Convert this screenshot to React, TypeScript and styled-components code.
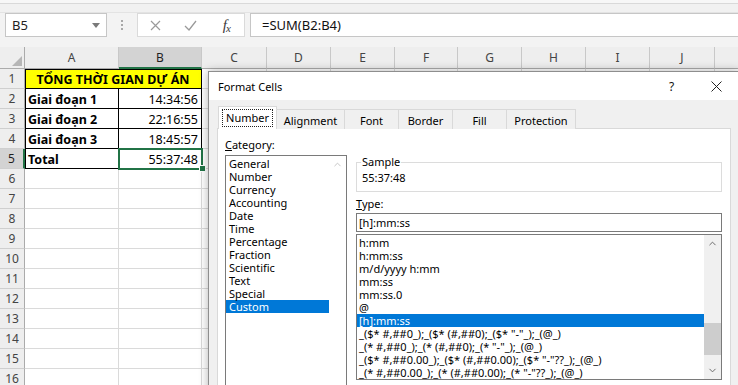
import React from 'react';
import styled, { createGlobalStyle } from 'styled-components';
import { ChevronUp, ChevronDown } from 'lucide-react';

const Global = createGlobalStyle`
  html, body { margin: 0; padding: 0; background: #fff; }
  body { width: 738px; height: 385px; overflow: hidden; }
  * { box-sizing: border-box; }
`;

const Page = styled.div`
  position: relative;
  width: 738px;
  height: 385px;
  overflow: hidden;
  display: flex;
  flex-direction: column;
  background: #f3f3f3;
  font-family: "Noto Sans", sans-serif;
`;

const RibbonEdge = styled.div`
  height: 13px;
  flex: none;
  background: #f1f1f1;
  border-top: 3px solid #f7f7f7;
  border-bottom: 1px solid #e3e3e3;
  box-shadow: inset 0 1px 0 #d9d9d9;
`;

const FormulaRow = styled.div`
  display: flex;
  align-items: stretch;
  height: 34px;
  flex: none;
  padding: 0 0 10px 5px;
  background: #f3f3f3;
`;

const NameBox = styled.div`
  width: 102px;
  background: #fff;
  border: 1px solid #c6c6c6;
  display: flex;
  align-items: center;
  justify-content: space-between;
  padding: 0 6px;
  font-size: 13px;
  color: #222;
`;

const Grip = styled.div`
  width: 30px;
  display: flex;
  flex-direction: column;
  align-items: center;
  justify-content: center;
  gap: 2px;
  span {
    width: 2px;
    height: 2px;
    background: #a8a8a8;
  }
`;

const FxBox = styled.div`
  width: 108px;
  background: #fff;
  border: 1px solid #dadada;
  display: flex;
  align-items: center;
`;

const FxCell = styled.div`
  width: 36px;
  height: 100%;
  display: flex;
  align-items: center;
  justify-content: center;
`;

const FxGlyph = styled.span`
  font-family: "Liberation Serif", serif;
  font-style: italic;
  font-size: 15px;
  color: #3a3a3a;
  letter-spacing: -1px;
  span {
    font-size: 11px;
    position: relative;
    top: 2px;
  }
`;

const FormulaInput = styled.div`
  flex: 1;
  margin-left: 5px;
  background: #fff;
  border: 1px solid #c6c6c6;
  border-right: none;
  display: flex;
  align-items: center;
  padding-left: 11px;
  font-size: 13px;
  color: #111;
`;

const Sheet = styled.div`
  display: grid;
  grid-template-columns: 25px 94px 83px 65px 64px 64px 63px 64px 64px 64px 65px 64px;
  grid-template-rows: 22px;
  grid-auto-rows: 20px;
  background: #fff;
  flex: 1;
`;

const Corner = styled.div`
  background: #eeeeee;
  border-right: 1px solid #ababab;
  border-bottom: 1px solid #ababab;
  display: flex;
  align-items: flex-end;
  justify-content: flex-end;
  padding: 0 2px 2px 0;
`;

const ColHead = styled.div<{ $active?: boolean }>`
  background: ${p => (p.$active ? '#d3d3d3' : '#eeeeee')};
  border-right: 1px solid #c8c8c8;
  border-bottom: ${p => (p.$active ? '2px solid #217346' : '1px solid #ababab')};
  display: flex;
  align-items: center;
  justify-content: center;
  font-size: 12px;
  color: ${p => (p.$active ? '#1f1f1f' : '#444')};
  padding-top: ${p => (p.$active ? '1px' : '0')};
`;

const RowHead = styled.div<{ $active?: boolean }>`
  background: ${p => (p.$active ? '#d3d3d3' : '#eeeeee')};
  border-bottom: 1px solid #cfcfcf;
  border-right: ${p => (p.$active ? '2px solid #217346' : '1px solid #ababab')};
  display: flex;
  align-items: center;
  justify-content: center;
  font-size: 12px;
  color: ${p => (p.$active ? '#1f1f1f' : '#444')};
`;

type CellProps = {
  $ruled?: boolean;
  $left?: boolean;
  $top?: boolean;
  $fill?: string;
  $align?: 'flex-start' | 'flex-end' | 'center';
  $bold?: boolean;
  $span?: number;
  $sel?: boolean;
};

const Cell = styled.div<CellProps>`
  position: ${p => (p.$sel ? 'relative' : 'static')};
  grid-column: span ${p => p.$span || 1};
  background: ${p => p.$fill || '#fff'};
  border-right: 1px solid ${p => (p.$ruled ? '#000' : '#dadada')};
  border-bottom: 1px solid ${p => (p.$ruled ? '#000' : '#dadada')};
  box-shadow: ${p =>
    [p.$left ? 'inset 1px 0 0 #000' : '', p.$top ? 'inset 0 1px 0 #000' : '']
      .filter(Boolean)
      .join(', ') || 'none'};
  display: flex;
  align-items: center;
  justify-content: ${p => p.$align || 'flex-start'};
  padding: 1px 3px 0 3px;
  font-size: 12.5px;
  font-weight: ${p => (p.$bold ? 700 : 400)};
  color: #000;
  white-space: nowrap;
`;

const Selection = styled.div`
  position: absolute;
  top: -1px;
  left: -1px;
  right: -2px;
  bottom: -2px;
  border: 2px solid #217346;
  z-index: 2;
  pointer-events: none;
`;

const FillHandle = styled.div`
  position: absolute;
  right: -5px;
  bottom: -4px;
  width: 7px;
  height: 7px;
  background: #217346;
  border: 1px solid #fff;
  z-index: 3;
`;

/* ---------- dialog ---------- */

const Dialog = styled.div`
  position: absolute;
  left: 208px;
  top: 71px;
  width: 532px;
  height: 330px;
  background: #f0f0f0;
  border: 1px solid #8e8e8e;
  box-shadow: 0 0 9px rgba(0, 0, 0, 0.3);
  display: flex;
  flex-direction: column;
  font-family: "Noto Sans", sans-serif;
  font-size: 11px;
  color: #000;
  z-index: 5;
`;

const TitleBar = styled.div`
  height: 28px;
  flex: none;
  background: #fff;
  display: flex;
  align-items: center;
  padding-left: 9px;
`;

const Title = styled.div`
  flex: 1;
  font-size: 11px;
  padding-top: 1px;
`;

const TitleButton = styled.div`
  width: 45px;
  height: 100%;
  display: flex;
  align-items: center;
  justify-content: center;
  font-size: 12px;
  color: #111;
`;

const DialogBody = styled.div`
  flex: 1;
  display: flex;
  flex-direction: column;
  padding: 6px 8px 0 8px;
  min-height: 0;
`;

const TabStrip = styled.div`
  display: flex;
  align-items: flex-end;
  height: 23px;
  flex: none;
  padding-left: 1px;
  margin-bottom: -1px;
  position: relative;
  z-index: 1;
`;

const Tab = styled.div<{ $w: number; $active?: boolean }>`
  width: ${p => p.$w}px;
  height: ${p => (p.$active ? 23 : 20)}px;
  margin-right: -1px;
  border: 1px solid #d9d9d9;
  border-bottom: none;
  background: ${p => (p.$active ? '#fff' : '#f0f0f0')};
  display: flex;
  align-items: center;
  justify-content: center;
  padding-top: ${p => (p.$active ? '0' : '1px')};
  position: relative;
  z-index: ${p => (p.$active ? 2 : 1)};
`;

const FocusLabel = styled.span`
  outline: 1px dotted #222;
  outline-offset: 0;
  padding: 1px 3px;
  line-height: 14px;
`;

const Pane = styled.div`
  flex: 1;
  background: #fff;
  border: 1px solid #d9d9d9;
  display: flex;
  gap: 9px;
  padding: 0 8px 0 7px;
  min-height: 0;
`;

const LeftCol = styled.div`
  width: 122px;
  flex: none;
  padding-top: 9px;
  display: flex;
  flex-direction: column;
`;

const RightCol = styled.div`
  flex: 1;
  padding-top: 26px;
  display: flex;
  flex-direction: column;
`;

const Label = styled.div<{ $gap?: number }>`
  line-height: 14px;
  height: 14px;
  margin-top: ${p => p.$gap || 0}px;
`;

const ListBox = styled.div<{ $h: number; $gap?: number }>`
  height: ${p => p.$h}px;
  margin-top: ${p => p.$gap || 0}px;
  flex: none;
  border: 1px solid #7a7a7a;
  background: #fff;
  display: flex;
  overflow: hidden;
`;

const Items = styled.div`
  flex: 1;
  padding-top: 1px;
  min-width: 0;
  overflow: hidden;
`;

const Item = styled.div<{ $sel?: boolean; $pad?: number }>`
  height: 13px;
  line-height: 13px;
  padding-left: ${p => p.$pad ?? 3}px;
  white-space: nowrap;
  background: ${p => (p.$sel ? '#0078d7' : 'transparent')};
  color: ${p => (p.$sel ? '#fff' : '#000')};
`;

const ScrollBar = styled.div<{ $bg: string }>`
  width: 17px;
  flex: none;
  background: ${p => p.$bg};
  display: flex;
  flex-direction: column;
`;

const ScrollArrow = styled.div<{ $color: string }>`
  height: 17px;
  flex: none;
  display: flex;
  align-items: center;
  justify-content: center;
  color: ${p => p.$color};
`;

const Thumb = styled.div<{ $top: number; $h: number }>`
  margin-top: ${p => p.$top}px;
  height: ${p => p.$h}px;
  background: #cdcdcd;
  flex: none;
`;

const Spring = styled.div`
  flex: 1;
`;

const Group = styled.fieldset`
  margin: 0;
  padding: 2px 5px 6px 5px;
  border: 1px solid #dcdcdc;
  min-width: 0;
  legend {
    padding: 0 1px;
    margin-left: -1px;
    line-height: 14px;
    font-size: 11px;
  }
`;

const GroupValue = styled.div`
  line-height: 14px;
`;

const TextInput = styled.div`
  height: 19px;
  margin-top: 2px;
  border: 1px solid #7a7a7a;
  background: #fff;
  padding-left: 2px;
  display: flex;
  align-items: center;
  flex: none;
`;

/* ---------- data ---------- */

// the last column (K) lies past the window's right edge, so its label is not shown
const columns = ['A', 'B', 'C', 'D', 'E', 'F', 'G', 'H', 'I', 'J', ''];

const rows: { label: string; value: string }[] = [
  { label: 'Giai đoạn 1', value: '14:34:56' },
  { label: 'Giai đoạn 2', value: '22:16:55' },
  { label: 'Giai đoạn 3', value: '18:45:57' },
  { label: 'Total', value: '55:37:48' },
];

const categories = [
  'General',
  'Number',
  'Currency',
  'Accounting',
  'Date',
  'Time',
  'Percentage',
  'Fraction',
  'Scientific',
  'Text',
  'Special',
  'Custom',
];

const types = [
  'h:mm',
  'h:mm:ss',
  'm/d/yyyy h:mm',
  'mm:ss',
  'mm:ss.0',
  '@',
  '[h]:mm:ss',
  '_($* #,##0_);_($* (#,##0);_($* "-"_);_(@_)',
  '_(* #,##0_);_(* (#,##0);_(* "-"_);_(@_)',
  '_($* #,##0.00_);_($* (#,##0.00);_($* "-"??_);_(@_)',
  '_(* #,##0.00_);_(* (#,##0.00);_(* "-"??_);_(@_)',
];

const tabs = [
  { name: 'Number', w: 59 },
  { name: 'Alignment', w: 69 },
  { name: 'Font', w: 55 },
  { name: 'Border', w: 55 },
  { name: 'Fill', w: 55 },
  { name: 'Protection', w: 70 },
];

function EmptyCells({ count }: { count: number }) {
  return (
    <>
      {Array.from({ length: count }).map((_, i) => (
        <Cell key={i} />
      ))}
    </>
  );
}

export default function App() {
  const extraCols = columns.length - 2;
  return (
    <>
      <Global />
      <Page>
        <RibbonEdge />
        <FormulaRow>
          <NameBox>
            <span>B5</span>
            <svg width="8" height="5" viewBox="0 0 8 5">
              <path d="M0 0 H8 L4 5 Z" fill="#7a7a7a" />
            </svg>
          </NameBox>
          <Grip>
            <span />
            <span />
            <span />
          </Grip>
          <FxBox>
            <FxCell>
              <svg width="11" height="11" viewBox="0 0 11 11">
                <path d="M1 1 L10 10 M10 1 L1 10" stroke="#9a9a9a" strokeWidth="1.2" fill="none" />
              </svg>
            </FxCell>
            <FxCell>
              <svg width="13" height="11" viewBox="0 0 13 11">
                <path d="M1 6 L5 10 L12 1" stroke="#9a9a9a" strokeWidth="1.3" fill="none" />
              </svg>
            </FxCell>
            <FxCell>
              <FxGlyph>
                f<span>x</span>
              </FxGlyph>
            </FxCell>
          </FxBox>
          <FormulaInput>=SUM(B2:B4)</FormulaInput>
        </FormulaRow>

        <Sheet>
          <Corner>
            <svg width="10" height="10" viewBox="0 0 10 10">
              <path d="M10 0 V10 H0 Z" fill="#b6b6b6" />
            </svg>
          </Corner>
          {columns.map((c, i) => (
            <ColHead key={i} $active={c === 'B'}>
              {c}
            </ColHead>
          ))}

          <RowHead>1</RowHead>
          <Cell $span={2} $ruled $left $top $fill="#ffff00" $align="center" $bold>
            TỔNG THỜI GIAN DỰ ÁN
          </Cell>
          <EmptyCells count={extraCols} />

          {rows.map((r, i) => {
            const isTotal = i === rows.length - 1;
            return (
              <React.Fragment key={r.label}>
                <RowHead $active={isTotal}>{i + 2}</RowHead>
                <Cell $ruled $left $bold>
                  {r.label}
                </Cell>
                <Cell $ruled $align="flex-end" $sel={isTotal}>
                  {r.value}
                  {isTotal && (
                    <>
                      <Selection />
                      <FillHandle />
                    </>
                  )}
                </Cell>
                <EmptyCells count={extraCols} />
              </React.Fragment>
            );
          })}

          {Array.from({ length: 11 }).map((_, i) => (
            <React.Fragment key={i}>
              <RowHead>{i + 6}</RowHead>
              <EmptyCells count={columns.length} />
            </React.Fragment>
          ))}
        </Sheet>

        <Dialog>
          <TitleBar>
            <Title>Format Cells</Title>
            <TitleButton>?</TitleButton>
            <TitleButton>
              <svg width="11" height="11" viewBox="0 0 11 11">
                <path d="M0.5 0.5 L10.5 10.5 M10.5 0.5 L0.5 10.5" stroke="#222" strokeWidth="1" fill="none" />
              </svg>
            </TitleButton>
          </TitleBar>
          <DialogBody>
            <TabStrip>
              {tabs.map((t, i) => (
                <Tab key={t.name} $w={t.w} $active={i === 0}>
                  {i === 0 ? <FocusLabel>{t.name}</FocusLabel> : t.name}
                </Tab>
              ))}
            </TabStrip>
            <Pane>
              <LeftCol>
                <Label>
                  <u>C</u>ategory:
                </Label>
                <ListBox $h={260} $gap={3}>
                  <Items>
                    {categories.map(c => (
                      <Item key={c} $sel={c === 'Custom'}>
                        {c}
                      </Item>
                    ))}
                  </Items>
                  <ScrollBar $bg="#fff">
                    <ScrollArrow $color="#c2c2c2">
                      <ChevronUp size={11} strokeWidth={2} />
                    </ScrollArrow>
                  </ScrollBar>
                </ListBox>
              </LeftCol>
              <RightCol>
                <Group>
                  <legend>Sample</legend>
                  <GroupValue>55:37:48</GroupValue>
                </Group>
                <Label $gap={5}>
                  <u>T</u>ype:
                </Label>
                <TextInput>[h]:mm:ss</TextInput>
                <ListBox $h={146} $gap={2}>
                  <Items>
                    {types.map(t => (
                      <Item key={t} $sel={t === '[h]:mm:ss'} $pad={2}>
                        {t}
                      </Item>
                    ))}
                  </Items>
                  <ScrollBar $bg="#f0f0f0">
                    <ScrollArrow $color="#606060">
                      <ChevronUp size={11} strokeWidth={2} />
                    </ScrollArrow>
                    <Thumb $top={71} $h={32} />
                    <Spring />
                    <ScrollArrow $color="#606060">
                      <ChevronDown size={11} strokeWidth={2} />
                    </ScrollArrow>
                  </ScrollBar>
                </ListBox>
              </RightCol>
            </Pane>
          </DialogBody>
        </Dialog>
      </Page>
    </>
  );
}
